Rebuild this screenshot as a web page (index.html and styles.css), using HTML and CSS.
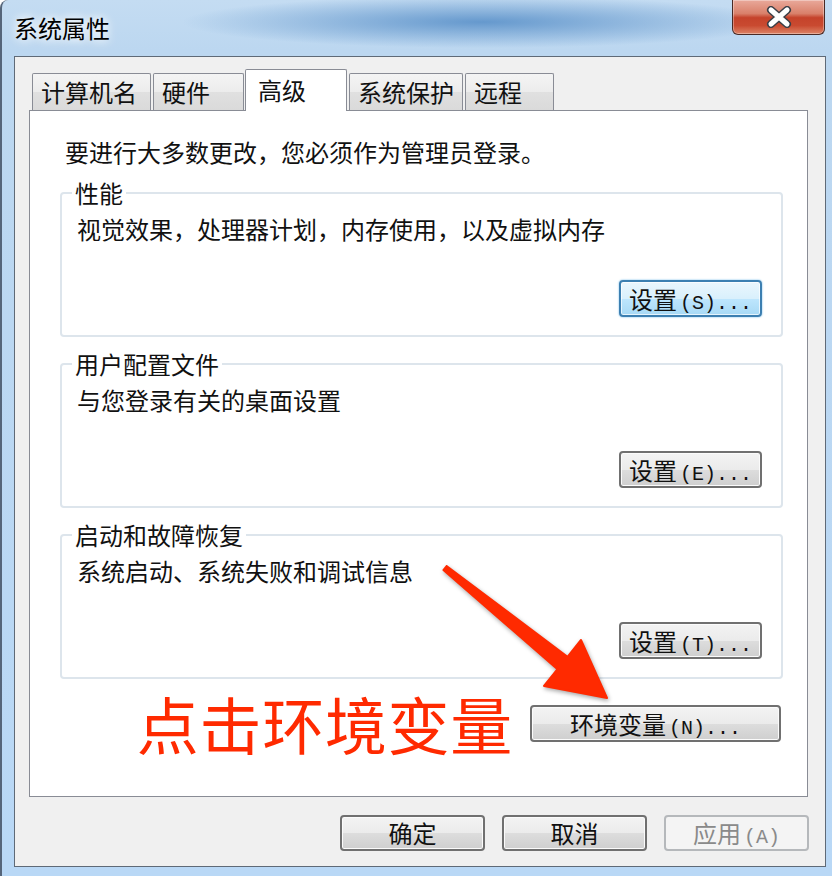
FILE: index.html
```html
<!DOCTYPE html>
<html lang="zh-CN">
<head>
  <meta charset="UTF-8">
  <title>系统属性</title>
  <link rel="stylesheet" href="styles.css">
</head>
<body>
  <div class="window">
    <div class="titlebar">
      <div class="title">系统属性</div>
      <div class="close">
        <svg width="28" height="22" viewBox="0 0 28 22">
          <path d="M6 4 L22 18 M22 4 L6 18" stroke="#3a3f47" stroke-width="8" stroke-linecap="round"/>
          <path d="M6 4 L22 18 M22 4 L6 18" stroke="#fff" stroke-width="5" stroke-linecap="round"/>
        </svg>
      </div>
    </div>

    <div class="client">
      <div class="tabs">
        <div class="tab t1">计算机名</div>
        <div class="tab t2">硬件</div>
        <div class="tab active">高级</div>
        <div class="tab t4">系统保护</div>
        <div class="tab t5">远程</div>
      </div>

      <div class="panel">
        <p class="intro">要进行大多数更改，您必须作为管理员登录。</p>

        <fieldset class="group">
          <legend>性能</legend>
          <div class="desc">视觉效果，处理器计划，内存使用，以及虚拟内存</div>
          <div class="actions"><button class="btn focus">设置<span class="acc">(S)...</span></button></div>
        </fieldset>

        <fieldset class="group">
          <legend>用户配置文件</legend>
          <div class="desc">与您登录有关的桌面设置</div>
          <div class="actions"><button class="btn">设置<span class="acc">(E)...</span></button></div>
        </fieldset>

        <fieldset class="group">
          <legend>启动和故障恢复</legend>
          <div class="desc">系统启动、系统失败和调试信息</div>
          <div class="actions"><button class="btn">设置<span class="acc">(T)...</span></button></div>
        </fieldset>

        <div class="env-row">
          <span class="note">点击环境变量</span>
          <button class="btn env">环境变量<span class="acc">(N)...</span></button>
        </div>
      </div>

      <div class="footer">
        <button class="btn wide">确定</button>
        <button class="btn wide">取消</button>
        <button class="btn wide" disabled>应用<span class="acc">(A)</span></button>
      </div>
    </div>

    <!-- 标注箭头 -->
    <svg class="arrow" width="175" height="145" viewBox="0 0 175 145">
      <polygon points="8.6,6 129.5,96.8 143,80 169,138 106,126 119.5,109.2 5.4,10"
               fill="#ff2a00" stroke="#ff2a00" stroke-width="2" stroke-linejoin="round"/>
    </svg>
  </div>
</body>
</html>
```

FILE: styles.css
```css
body {
  margin: 0;
  font-family: "Noto Sans CJK SC", sans-serif;
}

.window {
  position: relative;
  width: 832px;
  height: 876px;
  box-sizing: border-box;
  overflow: hidden;
  border-left: 2px solid #55657a;
  border-top-left-radius: 8px;
  font-size: 24px;
  line-height: 30px;
  color: #111;
  background:
    radial-gradient(ellipse 300px 26px at 480px 22px, rgba(78, 136, 196, 0.8), rgba(78, 136, 196, 0)),
    linear-gradient(#c4dcf2 0, #bcd7f0 50px, #b9d8f6 100%);
}

.titlebar {
  height: 56px;
  display: flex;
  justify-content: space-between;
  align-items: flex-start;
  padding-left: 12px;
}
.title {
  margin-top: 13px;
  font-size: 24px;
  line-height: 30px;
  color: #000;
  text-shadow: 0 0 8px #fff, 0 0 12px rgba(255, 255, 255, 0.9);
}
.close {
  width: 93px;
  height: 35px;
  box-sizing: border-box;
  margin-right: 7px;
  border: 1px solid #4a2a25;
  border-top: none;
  border-radius: 0 0 6px 6px;
  background: linear-gradient(#e9a99b 0, #d9806a 40%, #c5432b 52%, #c94a30 75%, #dd8466 100%);
  box-shadow: inset 0 0 0 1px rgba(255, 255, 255, 0.35);
  display: flex;
  align-items: center;
  justify-content: center;
}

.client {
  height: 811px;
  box-sizing: border-box;
  margin: 0 6px 0 12px;
  border: 1px solid #5f6a77;
  background: #f0f0f0;
  padding: 12px 17px 0 14px;
}

.tabs {
  position: relative;
  z-index: 1;
  height: 41px;
  display: flex;
  align-items: flex-end;
  padding-left: 3px;
}
.tab {
  height: 37px;
  box-sizing: border-box;
  border: 1px solid #898c95;
  border-bottom: none;
  border-radius: 2px 2px 0 0;
  background: linear-gradient(#f4f4f4 0, #ececec 50%, #e0e0e0 51%, #dadada 100%);
  margin-right: 2px;
  padding-left: 8px;
  font-size: 24px;
  line-height: 36px;
}
.t1 { width: 119px; }
.t2 { width: 91px; margin-right: 1px; }
.t4 { width: 114px; }
.t5 { width: 89px; }
.tab.active {
  width: 102px;
  height: 42px;
  margin-bottom: -1px;
  padding: 3px 0 0 12px;
  line-height: 34px;
  background: #fff;
}

.panel {
  height: 687px;
  box-sizing: border-box;
  border: 1px solid #898c95;
  background: #fff;
  padding: 26px 24px 0 30px;
}
.intro {
  margin: 0 0 11px;
  padding-left: 5px;
}

.group {
  margin: 0 0 12px;
  min-width: 0;
  border: 2px solid #dde5ec;
  border-radius: 4px;
  padding: 6px 19px 18px 15px;
}
.group legend {
  margin-left: -5px;
  padding: 0 3px;
}
.actions {
  display: flex;
  justify-content: flex-end;
  margin-top: 36px;
}

.btn {
  width: 143px;
  height: 37px;
  box-sizing: border-box;
  padding: 0;
  border: 2px solid #707070;
  border-radius: 4px;
  background: linear-gradient(#f3f3f3 0, #ebebeb 50%, #dddddd 51%, #cfcfcf 100%);
  box-shadow: inset 0 0 0 1px #fbfbfb;
  font-family: "Noto Sans CJK SC", sans-serif;
  font-size: 24px;
  line-height: 33px;
  color: #111;
  text-align: center;
}
.btn .acc {
  margin-left: 3px;
  font-family: "Liberation Mono", monospace;
  font-size: 20px;
}
.btn.focus {
  border-color: #3c7fb1;
  background: linear-gradient(#eaf6fd 0, #d9f0fc 50%, #bee6fd 51%, #a7d9f5 100%);
  box-shadow: inset 0 0 0 1px rgba(255, 255, 255, 0.7), 0 0 2px #5fb1e6;
}
.btn:disabled {
  border-color: #b5b8bb;
  background: #f4f4f4;
  box-shadow: none;
  color: #8a8a8a;
}

.env-row {
  display: flex;
  justify-content: flex-end;
  align-items: center;
  gap: 17px;
}
.note {
  font-size: 62px;
  line-height: 64px;
  letter-spacing: 0.7px;
  color: #ff2a00;
}
.btn.env {
  width: 251px;
  margin-right: 2px;
}

.footer {
  display: flex;
  justify-content: flex-end;
  gap: 17px;
  margin: 18px -1px 0 0;
}
.btn.wide {
  width: 145px;
  height: 36px;
  line-height: 32px;
}

.arrow {
  position: absolute;
  left: 436px;
  top: 560px;
  overflow: visible;
  filter: drop-shadow(1px 2px 2px rgba(0, 0, 0, 0.35));
}
```
